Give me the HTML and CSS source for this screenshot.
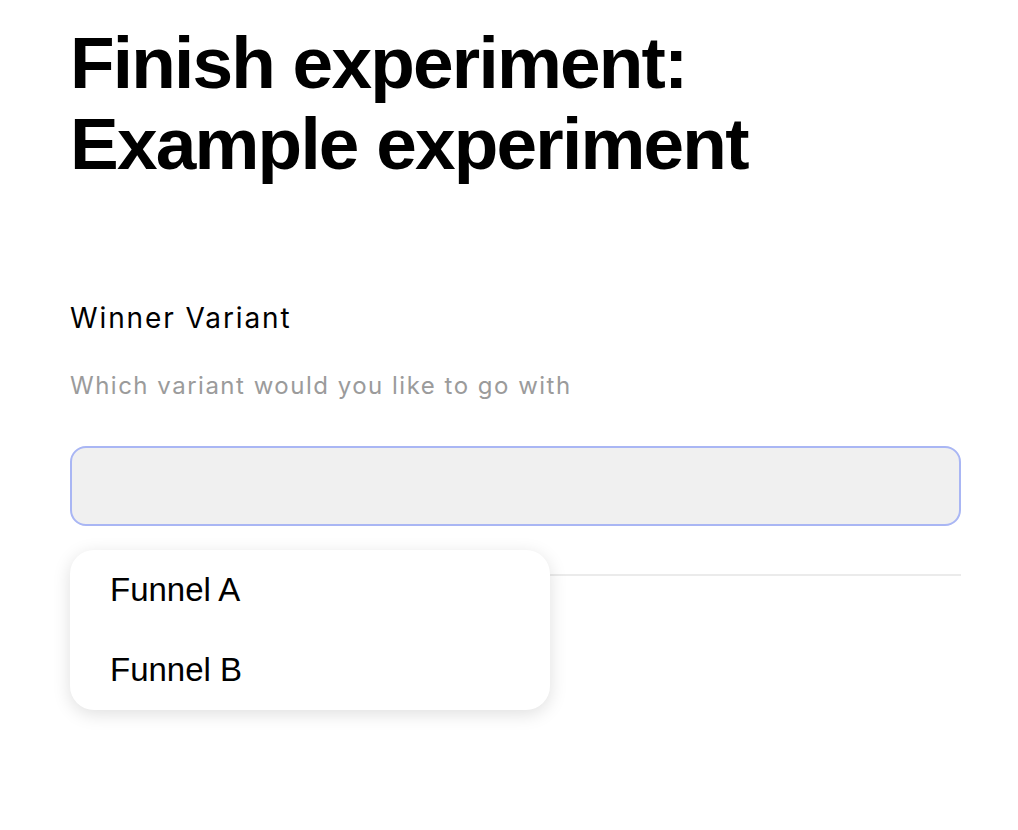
FILE: index.html
```html
<!DOCTYPE html>
<html lang="en">
<head>
<meta charset="utf-8">
<title>Finish experiment</title>
<link rel="stylesheet" href="styles.css">
</head>
<body>
<main class="page">
  <h1 class="title">Finish experiment:<br>Example experiment</h1>
  <section class="field">
    <div class="label">Winner Variant</div>
    <div class="hint">Which variant would you like to go with</div>
    <div class="select-wrap">
      <div class="select"></div>
      <ul class="menu">
        <li class="option">Funnel A</li>
        <li class="option">Funnel B</li>
      </ul>
    </div>
    <div class="divider"></div>
  </section>
</main>
</body>
</html>
```

FILE: styles.css
```css
html, body {
  margin: 0;
  padding: 0;
  background: #ffffff;
}

.page {
  box-sizing: border-box;
  min-height: 830px;
  padding: 22px 0 0 70px;
  width: 961px;
}

.title {
  margin: 0;
  font-family: "Liberation Sans", Arial, sans-serif;
  font-weight: 700;
  font-size: 73px;
  line-height: 81px;
  letter-spacing: -1.8px;
  color: #000;
}

.field {
  margin-top: 116px;
}

.label {
  font-family: Inter, "Noto Sans", sans-serif;
  font-size: 28px;
  line-height: 36px;
  letter-spacing: 1.9px;
  color: #000;
}

.hint {
  margin-top: 34px;
  font-family: Inter, "Noto Sans", sans-serif;
  font-size: 24px;
  line-height: 32px;
  letter-spacing: 1.5px;
  color: #9b9b9b;
}

.select-wrap {
  position: relative;
  margin-top: 44px;
}

.select {
  box-sizing: border-box;
  height: 80px;
  background: #f0f0f0;
  border: 2px solid #a9b6f4;
  border-radius: 16px;
}

.menu {
  position: absolute;
  top: 104px;
  left: 0;
  width: 480px;
  margin: 0;
  padding: 0;
  list-style: none;
  background: #fff;
  border-radius: 24px;
  box-shadow: 0 4px 18px rgba(0, 0, 0, 0.13);
  z-index: 2;
}

.option {
  height: 80px;
  padding-left: 40px;
  font-family: "Liberation Sans", Arial, sans-serif;
  font-size: 33px;
  line-height: 80px;
  color: #000;
}

.divider {
  margin-top: 48px;
  height: 2px;
  background: #ebebeb;
}
```
